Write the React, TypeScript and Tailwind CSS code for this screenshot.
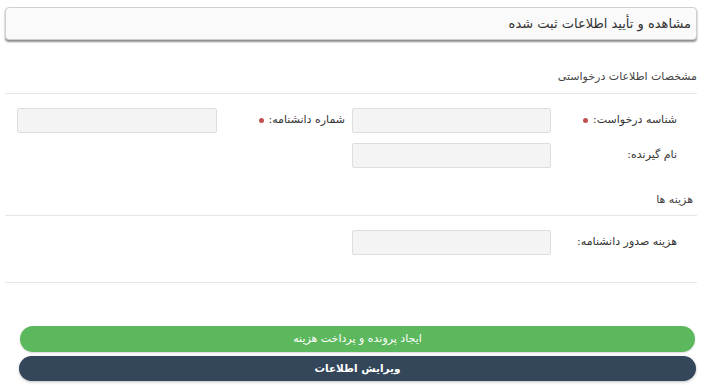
import React from "react";

const Dot = () => <span className="inline-block w-[5px] h-[5px] rounded-full bg-[#c0504d] mr-[5px] align-middle" />;

const Field = ({ label, required, labelW, labelPr, inputW }: { label: string; required?: boolean; labelW: string; labelPr: string; inputW: string }) => (
	<>
		<div className={`${labelW} ${labelPr} flex items-center text-[11px] text-[#333]`}>
			<span>{label}</span>
			{required && <Dot />}
		</div>
		<div className={`${inputW} h-[25px] bg-[#f4f4f4] border border-[#dedede] rounded-[2px]`} />
	</>
);

const App = () => {
	return (
		<div dir="rtl" className="w-[704px] h-[385px] bg-white overflow-hidden" style={{ fontFamily: '"DejaVu Sans", sans-serif' }}>
			<div className="pt-[7px] pr-[7px] pl-[5px]">
				<div className="h-[33px] bg-[#fafafa] border border-[#cfcfcf] rounded-[4px] shadow-[0_2px_2px_rgba(0,0,0,0.45)] flex items-center pr-[5px] text-[13px] text-[#333]">
					مشاهده و تأیید اطلاعات ثبت شده
				</div>
			</div>

			<div className="pr-[7px] pl-[5px] mt-[27px]">
				<div className="h-[20px] flex items-center text-[11px] text-[#444]">مشخصات اطلاعات درخواستی</div>
				<div className="border-b border-[#e6e6e6] mt-[6px]" />
			</div>

			<div className="mt-[14px] pr-[7px] flex flex-col gap-[10px]">
				<div className="flex">
					<Field label="شناسه درخواست:" required labelW="w-[146px]" labelPr="pr-[20px]" inputW="w-[199px]" />
					<div className="w-[7px]" />
					<Field label="شماره دانشنامه:" required labelW="w-[128px]" labelPr="pr-0" inputW="w-[200px]" />
				</div>
				<div className="flex">
					<Field label="نام گیرنده:" labelW="w-[146px]" labelPr="pr-[20px]" inputW="w-[199px]" />
				</div>
			</div>

			<div className="pr-[11px] pl-[5px] mt-[22px]">
				<div className="h-[20px] flex items-center text-[11px] text-[#444]">هزینه ها</div>
			</div>
			<div className="pr-[7px] pl-[5px]">
				<div className="border-b border-[#e6e6e6] mt-[5px]" />
			</div>

			<div className="mt-[14px] pr-[7px] flex">
				<Field label="هزینه صدور دانشنامه:" labelW="w-[146px]" labelPr="pr-[20px]" inputW="w-[199px]" />
			</div>

			<div className="pr-[7px] pl-[5px]">
				<div className="border-b border-[#e6e6e6] mt-[27px]" />
			</div>

			<div className="mt-[43px] flex flex-col gap-[4px] pl-[19px] pr-[8px]">
				<button className="h-[26px] mr-[1px] ml-[1px] rounded-full bg-[#5cb85c] text-white text-[11px] flex items-center justify-center shadow-[0_1px_2px_rgba(0,0,0,0.15)]">
					ایجاد پرونده و پرداخت هزینه
				</button>
				<button className="h-[25px] rounded-full bg-[#34465a] text-white text-[10.5px] font-bold flex items-center justify-center shadow-[0_1px_3px_rgba(0,0,0,0.25)]">
					ویرایش اطلاعات
				</button>
			</div>
		</div>
	);
};

export default App;
